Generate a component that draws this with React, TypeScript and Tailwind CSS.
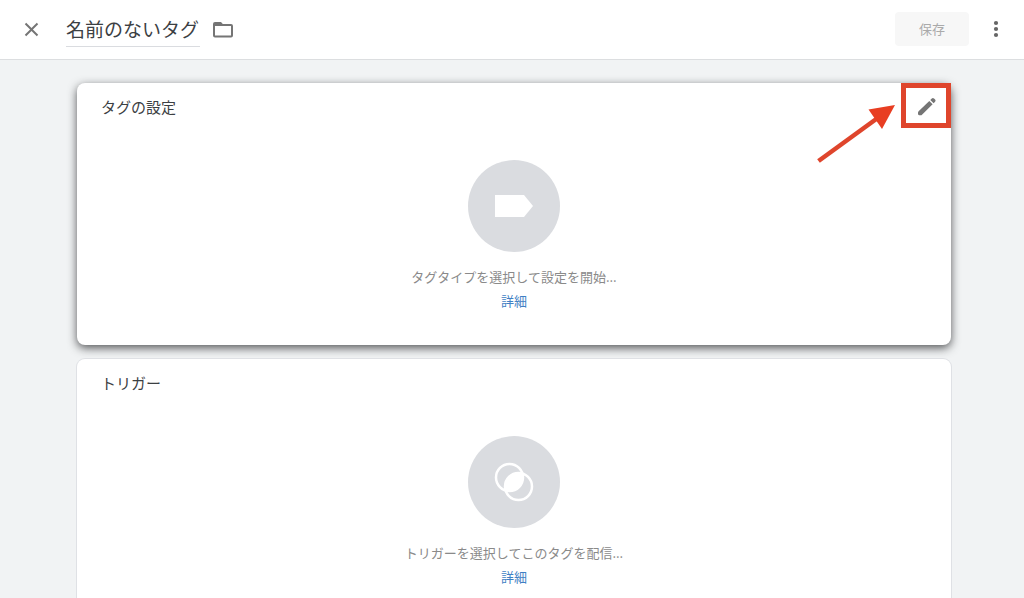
import React from 'react'

type EmptyCardProps = {
  title: string
  hint: string
  className: string
  icon: React.ReactNode
  children?: React.ReactNode
}

function EmptyCard({ title, hint, className, icon, children }: EmptyCardProps) {
  return (
    <section className={`relative rounded-lg bg-white px-6 pb-[34px] ${className}`}>
      <h2 className="pt-3 text-[15px] leading-6 text-[#3c4043]">{title}</h2>
      {children}
      <div className="mt-[41px] flex flex-col items-center">
        <div className="flex size-23 items-center justify-center rounded-full bg-[#dadce0]">{icon}</div>
        <p className="mt-[15px] text-[13px] leading-5 text-[#8a8a8a]">{hint}</p>
        <a href="#details" className="mt-1 text-[13px] leading-5 text-[#3f7fc4]">
          詳細
        </a>
      </div>
    </section>
  )
}

export default function App() {
  return (
    <div className="h-screen overflow-hidden bg-[#f1f3f4] font-['Noto_Sans_CJK_JP',sans-serif]">
      {/* Header */}
      <header className="flex h-15 items-center border-b border-[#dcdee0] bg-white pr-4 pb-0.5 pl-5">
        <button aria-label="閉じる" className="text-[#757575]">
          <svg viewBox="0 0 24 24" fill="currentColor" className="size-6">
            <path d="M18.200 7.200L16.800 5.800 11.500 11.100 6.200 5.800 4.800 7.200 10.100 12.500 4.800 17.800 6.200 19.200 11.500 13.900 16.800 19.200 18.200 17.800 12.900 12.500z" />
          </svg>
        </button>
        <input
          aria-label="タグ名"
          defaultValue="名前のないタグ"
          className="ml-[22px] h-9 w-[134px] border-b border-[#dadce0] text-[19px] text-[#3c4043] outline-none"
        />
        <button aria-label="フォルダ" className="ml-[11px] text-[#757575]">
          <svg viewBox="0 0 24 24" fill="currentColor" className="size-6">
            <path fillRule="evenodd" d="M4 5h6l1.800 2H20q2 0 2 2v9.500q0 2-2 2H4q-2 0-2-2V7q0-2 2-2zM4 9v9.500h16V9z" />
          </svg>
        </button>
        <button disabled className="ml-auto h-[34px] rounded-sm bg-[#f7f7f7] px-6 text-[13px] text-[#aaaaaa]">
          保存
        </button>
        <button aria-label="その他" className="ml-[15px] text-[#666666]">
          <svg viewBox="0 0 24 24" fill="currentColor" className="size-6">
            <circle cx="12" cy="6" r="2.100" />
            <circle cx="12" cy="12" r="2.100" />
            <circle cx="12" cy="18" r="2.100" />
          </svg>
        </button>
      </header>

      {/* Cards */}
      <main className="flex flex-col gap-3.5 pt-[23px] pr-[73px] pl-[77px]">
        <EmptyCard
          title="タグの設定"
          hint="タグタイプを選択して設定を開始..."
          className="shadow-[0_3px_10px_rgba(32,33,36,0.75)]"
          icon={
            <svg viewBox="0 0 40 24" fill="white" className="h-6 w-10">
              <path d="M1 1h29l9 11-9 11H1z" />
            </svg>
          }
        >
          <div className="absolute top-0 right-0 flex h-[45px] w-[50px] items-center justify-center border-5 border-[#df452c]">
            <button aria-label="編集" className="text-[#757575]">
              <svg viewBox="0 0 24 24" fill="currentColor" className="size-6">
                <path d="M4.600 17.300L15.300 7l3.300 3.300L8 20.700Q7.500 21.200 6.700 21.200H5.100Q4 21.200 4 20.100V18.700Q4 17.900 4.600 17.300zM16.300 6l1.500-1.500q1.100-1 2.200 0l1.100 1.100q1 1.100 0 2.200L19.600 9.300z" />
              </svg>
            </button>
          </div>
          <svg viewBox="0 0 80 60" className="absolute top-[21px] right-[54px] h-15 w-20">
            <path d="M1.500 57L62 13" stroke="#df452c" strokeWidth="4.500" />
            <path d="M78 1L51.500 5.500 65 25z" fill="#e83e22" />
          </svg>
        </EmptyCard>

        <EmptyCard
          title="トリガー"
          hint="トリガーを選択してこのタグを配信..."
          className="ring-1 ring-[#dfe1e5]"
          icon={
            <svg viewBox="0 0 40 40" fill="none" stroke="white" strokeWidth="2.500" className="size-10">
              <circle cx="15.500" cy="15.500" r="13.500" />
              <circle cx="24.500" cy="24.500" r="13.500" />
              <path d="M28.400 11.600A13.500 13.500 0 0 1 11.600 28.400A13.500 13.500 0 0 1 28.400 11.600z" fill="white" stroke="none" />
            </svg>
          }
        />
      </main>
    </div>
  )
}
